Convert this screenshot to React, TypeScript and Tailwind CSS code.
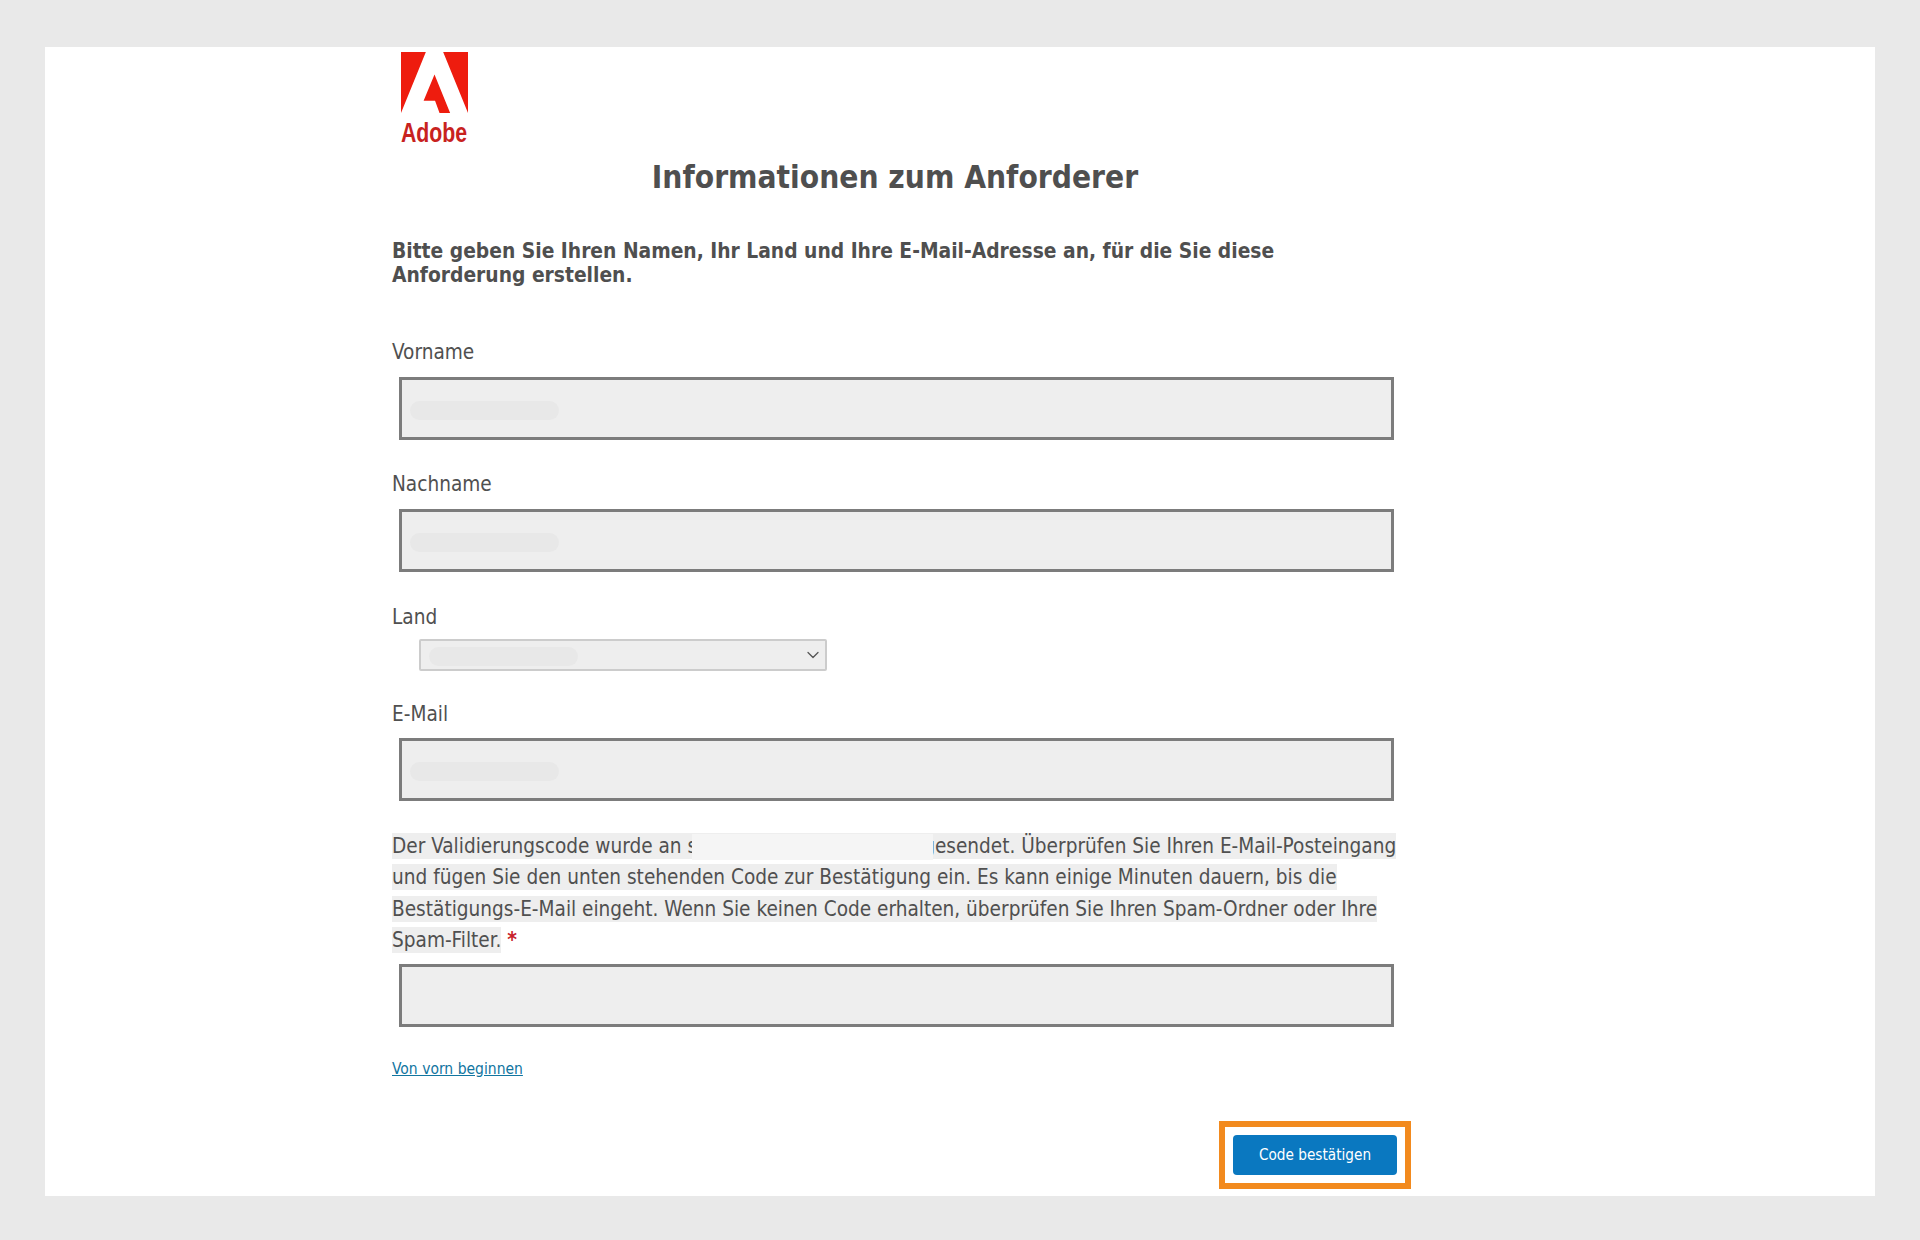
import React from 'react';
import { ChevronDown } from 'lucide-react';

const font = "[font-family:'DejaVu_Sans_Condensed','DejaVu_Sans',sans-serif]";

const Pill = ({ className }: { className: string }) => (
    <div className={`w-[149px] h-[19px] rounded-full bg-[#e8e8e8] ${className}`}></div>
);

const TextBox = ({ filled = true, className }: { filled?: boolean; className: string }) => (
    <div className={`ml-[7px] w-[995px] h-[63px] border-[3px] border-[#7c7c7c] bg-[#eeeeee] flex items-center pl-[8px] pt-[4px] ${className}`}>
        {filled && <Pill className="" />}
    </div>
);

const Label = ({ children, className }: { children: React.ReactNode; className: string }) => (
    <div className={`h-[26px] leading-[26px] text-[20.6px] text-[#505050] ${className}`}>{children}</div>
);

export default function App() {
    return (
        <div className={`min-h-[1240px] bg-[#e9e9e9] pt-[47px] px-[45px] ${font}`}>
            <div className="h-[1149px] bg-white pl-[347px]">
                <div className="w-[1019px] flex flex-col">
                    {/* Logo */}
                    <div className="ml-[9px] mt-[5px] w-[67px]">
                        <svg viewBox="0 2 24 20" preserveAspectRatio="none" className="w-[67px] h-[61px] block">
                            <path fill="#ee1c0e" d="M15.1 2H24v20L15.1 2zM8.9 2H0v20L8.9 2zM12 9.4L17.6 22h-3.8l-1.6-4H8.1L12 9.4z" />
                        </svg>
                        <div className="mt-[6px] h-[28px] leading-[28px] text-[28px] font-bold text-[#c8221e] [font-family:'Liberation_Sans',sans-serif] origin-left scale-x-[0.76] whitespace-nowrap">
                            Adobe
                        </div>
                    </div>

                    <h1 className="mt-[10px] w-[1006px] h-[40px] leading-[40px] text-center text-[31.4px] font-bold text-[#4f4f4f]">
                        Informationen zum Anforderer
                    </h1>

                    <p className="mt-[42px] text-[20.8px] leading-[24px] font-bold text-[#4f4f4f]">
                        Bitte geben Sie Ihren Namen, Ihr Land und Ihre E-Mail-Adresse an, für die Sie diese<br />
                        Anforderung erstellen.
                    </p>

                    <Label className="mt-[52px]">Vorname</Label>
                    <TextBox className="mt-[12px]" />

                    <Label className="mt-[31px]">Nachname</Label>
                    <TextBox className="mt-[12px]" />

                    <Label className="mt-[32px]">Land</Label>
                    <div className="mt-[9px] ml-[27px] w-[408px] h-[32px] border-2 border-[#cccccc] rounded-[2px] bg-[#eeeeee] flex items-center justify-between pl-[8px] pr-[2px]">
                        <Pill className="mt-[2px]" />
                        <ChevronDown size={20} strokeWidth={1.5} className="text-[#555555]" />
                    </div>

                    <Label className="mt-[30px]">E-Mail</Label>
                    <TextBox className="mt-[11px]" />

                    <p className="mt-[30px] text-[20.6px] leading-[31.4px] text-[#505050] whitespace-nowrap">
                        <span className="bg-[#eeeeee] py-[1px]">
                            Der Validierungscode wurde an s<span className="relative inline-block align-top ml-[-5px] mr-[-10px] w-[241px] h-[26px] mt-[3px] bg-[#f5f5f5]"></span>gesendet. Überprüfen Sie Ihren E-Mail-Posteingang
                        </span><br />
                        <span className="bg-[#eeeeee] py-[1px]">und fügen Sie den unten stehenden Code zur Bestätigung ein. Es kann einige Minuten dauern, bis die</span><br />
                        <span className="bg-[#eeeeee] py-[1px]">Bestätigungs-E-Mail eingeht. Wenn Sie keinen Code erhalten, überprüfen Sie Ihren Spam-Ordner oder Ihre</span><br />
                        <span className="bg-[#eeeeee] py-[1px]">Spam-Filter.</span> <span className="text-[#c8222a] font-bold">*</span>
                    </p>
                    <TextBox filled={false} className="mt-[7px]" />

                    <a href="#" className="mt-[31px] h-[22px] leading-[22px] text-[15.5px] text-[#11759f] underline self-start">
                        Von vorn beginnen
                    </a>

                    {/* Hervorgehobene Schaltfläche */}
                    <div className="mt-[41px] self-end w-[192px] h-[68px] border-[6px] border-[#f28a1e] flex items-center justify-center">
                        <button className="w-[164px] h-[40px] rounded-[4px] bg-[#0a78c0] text-white text-[15.2px] leading-[40px]">
                            Code bestätigen
                        </button>
                    </div>
                </div>
            </div>
        </div>
    );
}
